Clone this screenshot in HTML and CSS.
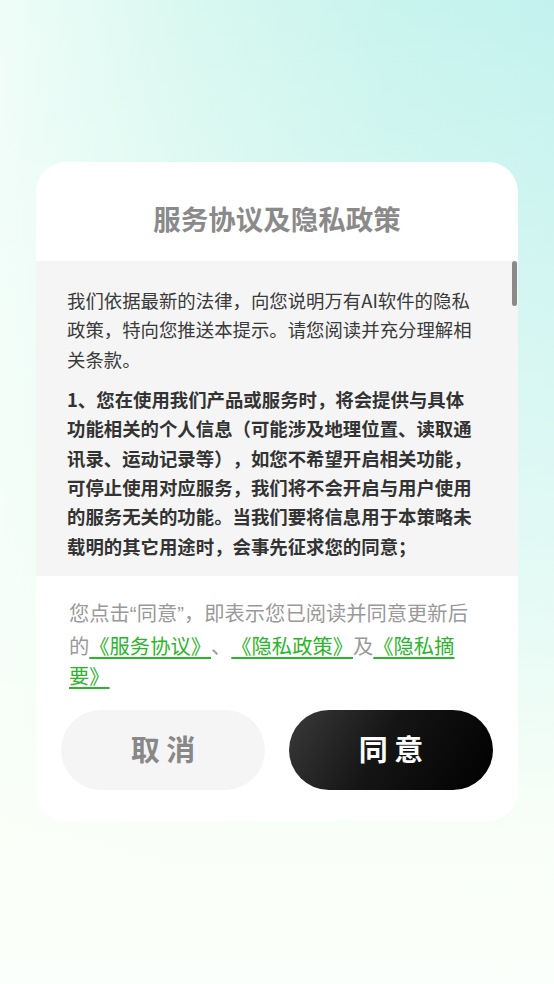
FILE: index.html
```html
<!DOCTYPE html>
<html lang="zh-CN">
<head>
<meta charset="utf-8">
<title>服务协议及隐私政策</title>
<link rel="stylesheet" href="styles.css">
</head>
<body>
<div class="page">
  <div class="card">
    <div class="header">
      <h1 class="title">服务协议及隐私政策</h1>
    </div>
    <div class="scroll-area">
      <div class="scroll-content">
        <p class="para">我们依据最新的法律，向您说明万有AI软件的隐私政策，特向您推送本提示。请您阅读并充分理解相关条款。</p>
        <p class="para bold">1、您在使用我们产品或服务时，将会提供与具体功能相关的个人信息（可能涉及地理位置、读取通讯录、运动记录等），如您不希望开启相关功能，可停止使用对应服务，我们将不会开启与用户使用的服务无关的功能。当我们要将信息用于本策略未载明的其它用途时，会事先征求您的同意；</p>
        <p class="para bold">2、我们会采取业界先进的安全措施保护您的信息安全；</p>
      </div>
      <div class="scroll-thumb"></div>
    </div>
    <div class="notice">您点击<span class="q">“</span>同意<span class="q">”</span>，即表示您已阅读并同意更新后的<a class="link" href="#">《服务协议》</a>、<a class="link" href="#">《隐私政策》</a>及<a class="link" href="#">《隐私摘要》</a></div>
    <div class="actions">
      <button class="btn btn-cancel">取 消</button>
      <button class="btn btn-agree">同 意</button>
    </div>
  </div>
</div>
</body>
</html>
```

FILE: styles.css
```css
* { box-sizing: border-box; }
html, body {
  margin: 0;
  padding: 0;
  height: 100%;
}
body {
  font-family: "Noto Sans CJK SC", "Noto Sans", sans-serif;
  text-spacing-trim: space-all;
  background:
    linear-gradient(180deg, rgba(250,255,250,0) 0%, rgba(250,255,250,0.55) 55%, rgba(250,255,248,0.97) 85%, #fbfffb 100%),
    linear-gradient(90deg, #effdf8 0%, #d8f8f0 35%, #c9f4ee 70%, #c3f2ee 100%);
  min-height: 984px;
}
.page {
  padding: 162px 36px 0;
}
.card {
  background: #fff;
  border-radius: 30px;
  overflow: hidden;
  padding-bottom: 31px;
}
.header {
  height: 99px;
  display: flex;
  align-items: flex-start;
  justify-content: center;
  padding-top: 36px;
}
.title {
  margin: 0;
  font-size: 27.5px;
  line-height: 40px;
  font-weight: 700;
  color: #8a8a8a;
}
.scroll-area {
  position: relative;
  height: 315px;
  background: #f5f5f5;
  overflow: hidden;
}
.scroll-content {
  padding: 25px 0 0 31px;
  width: 445px;
}
.para {
  margin: 0 0 10.6px;
  font-size: 18.4px;
  line-height: 29.4px;
  color: #3a3a3a;
}
.para.bold {
  font-weight: 700;
  color: #333;
}
.scroll-thumb {
  position: absolute;
  right: 1px;
  top: 0;
  width: 5px;
  height: 45px;
  border-radius: 3px;
  background: #8a8a8a;
}
.notice {
  padding: 21px 0 0 33px;
  width: 436px;
  font-size: 20.3px;
  line-height: 30.5px;
  color: #999;
}
.q {
  font-family: "Liberation Sans", sans-serif;
}
.link {
  color: #2cb52c;
  text-decoration: underline;
  text-underline-offset: 3px;
}
.actions {
  display: flex;
  gap: 24px;
  padding: 19px 25px 0;
}
.btn {
  flex: 1;
  height: 80px;
  border: none;
  border-radius: 40px;
  font-family: "Noto Sans CJK SC", "Noto Sans", sans-serif;
  font-size: 29px;
  line-height: 1;
  font-weight: 700;
  cursor: pointer;
  padding: 0 0 2px;
}
.btn-cancel {
  background: #f5f5f5;
  color: #888;
}
.btn-agree {
  background: linear-gradient(120deg, #3a3a3a 0%, #151515 45%, #000 100%);
  color: #fff;
}
```
